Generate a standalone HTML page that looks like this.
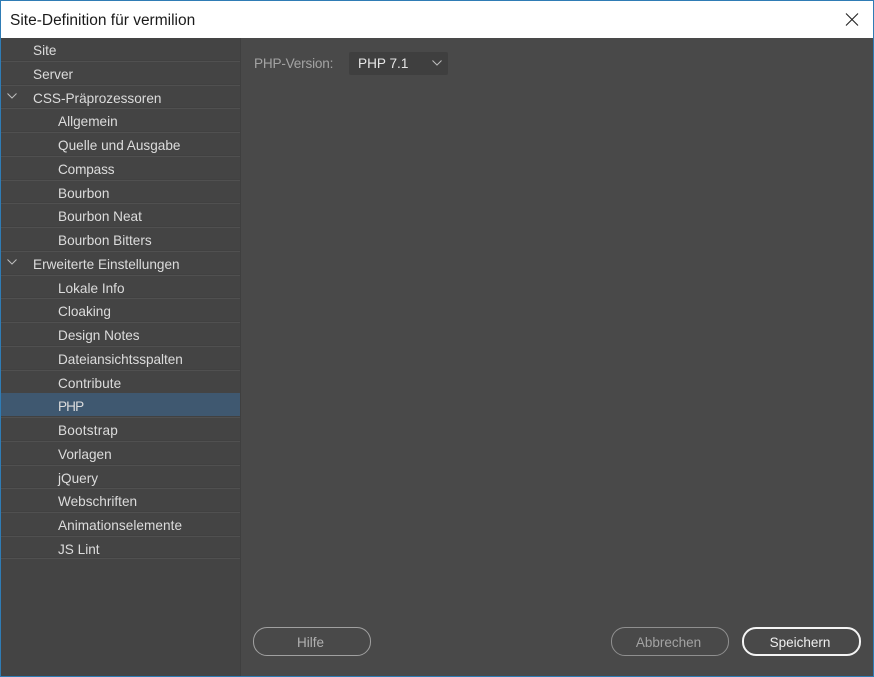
<!DOCTYPE html>
<html><head><meta charset="utf-8">
<style>
html,body{margin:0;padding:0;width:874px;height:677px;overflow:hidden;background:#494949;font-family:"Liberation Sans",sans-serif}
.abs{position:absolute}
.t{position:absolute;white-space:nowrap;font-size:13.6px;line-height:18px;color:#dcdcdc;margin-top:1px}
.sep{position:absolute;left:1px;width:239px;height:1px;background:#505050;box-shadow:0 -1px 0 #414141}
.btn{position:absolute;box-sizing:border-box;border-radius:14px;text-align:center;font-size:13.5px}
</style></head>
<body>
<div class="abs" style="left:0;top:0;width:874px;height:677px;background:#494949"></div>
<div class="abs" style="left:1px;top:1px;width:872px;height:37px;background:#fff"></div>
<div class="abs" style="left:0;top:0;width:874px;height:1px;background:#2f7cb5"></div>
<div class="abs" style="left:0;top:0;width:1px;height:677px;background:#2f7cb5"></div>
<div class="abs" style="left:873px;top:0;width:1px;height:677px;background:#2f7cb5"></div>
<div class="abs" style="left:0;top:676px;width:874px;height:1px;background:#2f7cb5"></div>
<div class="t" style="left:10px;top:11px;font-size:15.5px;color:#1a1a1a">Site-Definition für vermilion</div>
<svg class="abs" style="left:845px;top:13px" width="14" height="13"><path d="M1 0.5L13 12.5M13 0.5L1 12.5" stroke="#222" stroke-width="1.1" fill="none"/></svg>

<div class="abs" style="left:1px;top:38px;width:239px;height:638px;background:#444444"></div>
<div class="abs" style="left:240px;top:38px;width:1px;height:638px;background:#3f3f3f"></div>
<div class="abs" style="left:1px;top:393px;width:239px;height:24px;background:#3f5870"></div>

<div class="sep" style="top:61px"></div>
<div class="sep" style="top:85px"></div>
<div class="sep" style="top:108px"></div>
<div class="sep" style="top:132px"></div>
<div class="sep" style="top:156px"></div>
<div class="sep" style="top:180px"></div>
<div class="sep" style="top:203px"></div>
<div class="sep" style="top:227px"></div>
<div class="sep" style="top:251px"></div>
<div class="sep" style="top:275px"></div>
<div class="sep" style="top:298px"></div>
<div class="sep" style="top:322px"></div>
<div class="sep" style="top:346px"></div>
<div class="sep" style="top:370px"></div>
<div class="sep" style="top:417px"></div>
<div class="sep" style="top:441px"></div>
<div class="sep" style="top:465px"></div>
<div class="sep" style="top:488px"></div>
<div class="sep" style="top:512px"></div>
<div class="sep" style="top:536px"></div>
<div class="sep" style="top:558px"></div>

<svg class="abs" style="left:7px;top:93px" width="10" height="6"><path d="M0.5 0.5L5 5L9.5 0.5" stroke="#bdbdbd" stroke-width="1" fill="none"/></svg>
<svg class="abs" style="left:7px;top:259px" width="10" height="6"><path d="M0.5 0.5L5 5L9.5 0.5" stroke="#bdbdbd" stroke-width="1" fill="none"/></svg>

<div class="t" style="left:33px;top:41px">Site</div>
<div class="t" style="left:33px;top:65px">Server</div>
<div class="t" style="left:33px;top:89px">CSS-Präprozessoren</div>
<div class="t" style="left:58px;top:112px">Allgemein</div>
<div class="t" style="left:58px;top:136px">Quelle und Ausgabe</div>
<div class="t" style="left:58px;top:160px;letter-spacing:-.15px">Compass</div>
<div class="t" style="left:58px;top:184px">Bourbon</div>
<div class="t" style="left:58px;top:207px">Bourbon Neat</div>
<div class="t" style="left:58px;top:231px">Bourbon Bitters</div>
<div class="t" style="left:33px;top:255px">Erweiterte Einstellungen</div>
<div class="t" style="left:58px;top:279px">Lokale Info</div>
<div class="t" style="left:58px;top:302px">Cloaking</div>
<div class="t" style="left:58px;top:326px">Design Notes</div>
<div class="t" style="left:58px;top:350px;letter-spacing:-.03px">Dateiansichtsspalten</div>
<div class="t" style="left:58px;top:374px;letter-spacing:.05px">Contribute</div>
<div class="t" style="left:58px;top:397px;letter-spacing:-.9px">PHP</div>
<div class="t" style="left:58px;top:421px;letter-spacing:.2px">Bootstrap</div>
<div class="t" style="left:58px;top:445px">Vorlagen</div>
<div class="t" style="left:58px;top:469px">jQuery</div>
<div class="t" style="left:58px;top:492px">Webschriften</div>
<div class="t" style="left:58px;top:516px;letter-spacing:.05px">Animationselemente</div>
<div class="t" style="left:58px;top:540px">JS Lint</div>

<div class="t" style="left:254px;top:54px;color:#a3a3a3;letter-spacing:-.2px">PHP-Version:</div>
<div class="abs" style="left:349px;top:52px;width:99px;height:23px;background:#3f3f3f;border-radius:2px"></div>
<div class="t" style="left:358px;top:54px;color:#e6e6e6">PHP 7.1</div>
<svg class="abs" style="left:432px;top:60px" width="10" height="6"><path d="M0.5 0.5L5 5L9.5 0.5" stroke="#bdbdbd" stroke-width="1" fill="none"/></svg>

<div class="btn" style="left:253px;top:627px;width:118px;height:29px;border:1.5px solid #a0a0a0;color:#b0b0b0;line-height:30px;text-indent:-3px">Hilfe</div>
<div class="btn" style="left:611px;top:627px;width:118px;height:29px;border:1.5px solid #8f8f8f;color:#a3a3a3;line-height:30px;text-indent:-3px">Abbrechen</div>
<div class="btn" style="left:742px;top:627px;width:119px;height:29px;border:2.5px solid #f4f4f4;color:#f0f0f0;line-height:28px;text-indent:-3px">Speichern</div>
</body></html>
